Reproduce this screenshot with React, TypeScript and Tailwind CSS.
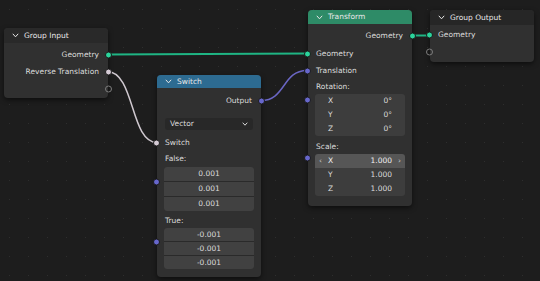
import type { ReactNode } from 'react';

function Chevron() {
  return (
    <svg width="7" height="5" viewBox="0 0 7 5" className="shrink-0">
      <path d="M0.8 0.8 L3.5 3.8 L6.2 0.8" fill="none" stroke="#e6e6e6" strokeWidth="1" />
    </svg>
  );
}

function Socket({ side, color, top = 'top-1/2' }: { side: 'left' | 'right'; color: string; top?: string }) {
  return (
    <span
      className={`absolute ${top} -translate-y-1/2 w-[7px] h-[7px] rounded-full border border-[#1a1a1a] ${
        side === 'left' ? 'left-[-4px]' : 'right-[-4px]'
      } ${color}`}
    />
  );
}

function EmptySocket({ side }: { side: 'left' | 'right' }) {
  return (
    <span
      className={`absolute top-1/2 -translate-y-1/2 w-[7px] h-[7px] rounded-full border border-[#7c7c7c] ${
        side === 'left' ? 'left-[-4px]' : 'right-[-4px]'
      }`}
    />
  );
}

function Node({
  pos,
  header,
  title,
  children,
}: {
  pos: string;
  header: string;
  title: string;
  children: ReactNode;
}) {
  return (
    <div className={`absolute w-[104px] rounded-[4px] bg-[#303030] shadow-[0_2px_5px_rgba(0,0,0,0.55)] ${pos}`}>
      <div className={`flex items-center gap-[5px] pl-[8px] rounded-t-[4px] text-[#e8e8e8] ${header}`}>
        <Chevron />
        <span>{title}</span>
      </div>
      {children}
    </div>
  );
}

function OutRow({ label, color, h = 'h-[17px]' }: { label: string; color: string; h?: string }) {
  return (
    <div className={`relative flex items-center justify-end pr-[9px] ${h}`}>
      <span>{label}</span>
      <Socket side="right" color={color} />
    </div>
  );
}

function InRow({ label, color, h = 'h-[17px]' }: { label: string; color: string; h?: string }) {
  return (
    <div className={`relative flex items-center pl-[8px] ${h}`}>
      <span>{label}</span>
      <Socket side="left" color={color} />
    </div>
  );
}

function VecField({ label, value, hi }: { label: string; value: string; hi?: boolean }) {
  return (
    <div
      className={`relative flex items-center justify-between h-[14px] px-[13px] ${
        hi ? 'bg-[#565656] text-[#f0f0f0]' : 'bg-[#3d3d3d]'
      }`}
    >
      {hi && <span className="absolute left-[4px] text-[#cfcfcf]">‹</span>}
      <span>{label}</span>
      <span>{value}</span>
      {hi && <span className="absolute right-[4px] text-[#cfcfcf]">›</span>}
    </div>
  );
}

function NumStack({ values, rowH }: { values: string[]; rowH: string }) {
  return (
    <div className="mx-[7px] flex flex-col gap-px rounded-[3px] overflow-hidden bg-[#2a2a2a]">
      {values.map((v, i) => (
        <div key={i} className={`flex items-center justify-center bg-[#414141] ${rowH}`}>
          {v}
        </div>
      ))}
    </div>
  );
}

export default function App() {
  return (
    <div className="relative w-[540px] h-[281px] overflow-hidden bg-[#1d1d1d] bg-[radial-gradient(circle,#2e2e2e_0.8px,transparent_1px)] bg-[size:19px_19px] font-['DejaVu_Sans',sans-serif] text-[7.5px] text-[#dcdcdc] leading-none">
      <svg className="absolute inset-0" width="540" height="281">
        <path d="M107 54.5 L307 53.5" stroke="#1fb584" strokeWidth="2" fill="none" />
        <path d="M412 35.5 L429 35.5" stroke="#1fb584" strokeWidth="2" fill="none" />
        <path d="M107 71.5 C135 71.5 130 142.5 157 142.5" stroke="#cfc8cf" strokeWidth="1.5" fill="none" />
        <path d="M261 100.5 C286 100.5 282 70.5 307 70.5" stroke="#6a66c4" strokeWidth="1.5" fill="none" />
      </svg>

      <Node pos="left-[4px] top-[28px]" header="h-[15px] bg-[#292929]" title="Group Input">
        <div className="pt-[3px] pb-[1px]">
          <OutRow label="Geometry" color="bg-[#2bd49c]" />
          <OutRow label="Reverse Translation" color="bg-[#d4cad4]" />
          <div className="relative h-[17px]">
            <EmptySocket side="right" />
          </div>
        </div>
      </Node>

      <Node pos="left-[157px] top-[75px]" header="h-[13px] bg-[#2d6b91]" title="Switch">
        <div className="pt-[4px] pb-[8px]">
          <OutRow label="Output" color="bg-[#6767cc]" />
          <div className="mx-[8px] mt-[9px] flex items-center justify-between h-[12px] pl-[5px] pr-[5px] rounded-[3px] bg-[#282828]">
            <span>Vector</span>
            <svg width="6" height="4" viewBox="0 0 6 4">
              <path d="M0.7 0.7 L3 3.2 L5.3 0.7" fill="none" stroke="#d8d8d8" strokeWidth="1" />
            </svg>
          </div>
          <div className="pt-[4px]">
            <InRow label="Switch" color="bg-[#d4cad4]" />
          </div>
          <div className="relative">
            <div className="flex items-center h-[16px] pl-[8px]">False:</div>
            <NumStack values={['0.001', '0.001', '0.001']} rowH="h-[14px]" />
            <Socket side="left" color="bg-[#6767cc]" top="top-[31px]" />
          </div>
          <div className="relative">
            <div className="flex items-center h-[17px] pt-[3px] pl-[8px]">True:</div>
            <NumStack values={['-0.001', '-0.001', '-0.001']} rowH="h-[13px]" />
            <Socket side="left" color="bg-[#6767cc]" top="top-[31px]" />
          </div>
        </div>
      </Node>

      <Node pos="left-[308px] top-[10px]" header="h-[14px] bg-[#2e8b67]" title="Transform">
        <div className="pt-[3px] pb-[10px]">
          <OutRow label="Geometry" color="bg-[#2bd49c]" />
          <div className="pt-px">
            <InRow label="Geometry" color="bg-[#2bd49c]" />
            <InRow label="Translation" color="bg-[#6767cc]" />
          </div>
          <div className="relative">
            <div className="flex items-center h-[15px] pl-[8px]">Rotation:</div>
            <div className="mx-[7px] flex flex-col rounded-[3px] overflow-hidden">
              <VecField label="X" value="0°" />
              <VecField label="Y" value="0°" />
              <VecField label="Z" value="0°" />
            </div>
            <Socket side="left" color="bg-[#6767cc]" top="top-[21px]" />
          </div>
          <div className="relative">
            <div className="flex items-center h-[18px] pt-[4px] pl-[8px]">Scale:</div>
            <div className="mx-[7px] flex flex-col rounded-[3px] overflow-hidden">
              <VecField label="X" value="1.000" hi />
              <VecField label="Y" value="1.000" />
              <VecField label="Z" value="1.000" />
            </div>
            <Socket side="left" color="bg-[#6767cc]" top="top-[22px]" />
          </div>
        </div>
      </Node>

      <Node pos="left-[430px] top-[10px]" header="h-[15px] bg-[#262626]" title="Group Output">
        <div className="pt-px pb-[2px]">
          <InRow label="Geometry" color="bg-[#2bd49c]" />
          <div className="relative h-[17px]">
            <EmptySocket side="left" />
          </div>
        </div>
      </Node>
    </div>
  );
}
